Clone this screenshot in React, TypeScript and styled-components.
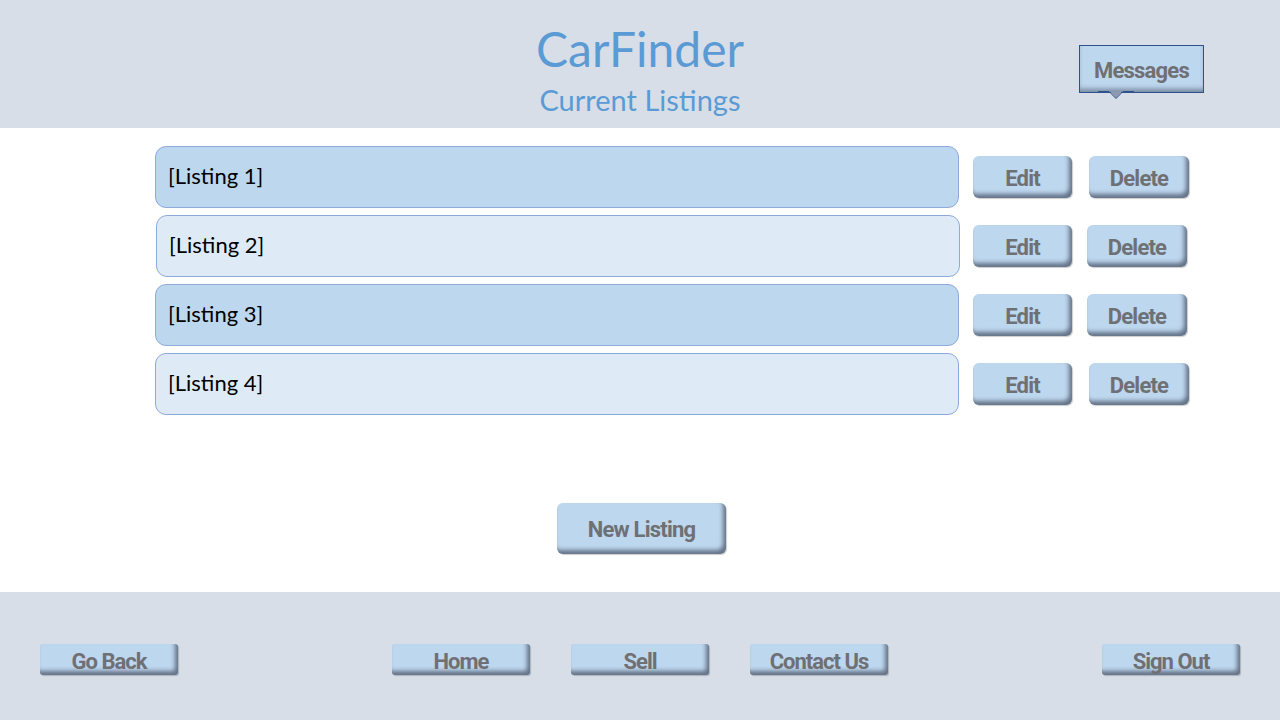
import React from "react";
import styled, { createGlobalStyle } from "styled-components";

const GlobalStyle = createGlobalStyle`
  html, body {
    margin: 0;
    padding: 0;
    background: #ffffff;
  }
  #root {
    width: 1280px;
    height: 720px;
  }
`;

const Page = styled.div`
  width: 1280px;
  height: 720px;
  display: flex;
  flex-direction: column;
  overflow: hidden;
`;

const Header = styled.header`
  height: 128px;
  background: #d7dee7;
  display: grid;
  grid-template-columns: 1fr auto 1fr;
  align-items: start;
`;

const TitleBlock = styled.div`
  display: flex;
  flex-direction: column;
  align-items: center;
  padding-top: 20px;
  font-family: Lato, "Open Sans", sans-serif;
  color: #5b9bd5;
`;

const Title = styled.h1`
  margin: 0;
  font-size: 48px;
  font-weight: 400;
  line-height: 58px;
`;

const Subtitle = styled.h2`
  margin: 5px 0 0;
  font-size: 29px;
  font-weight: 400;
  line-height: 34px;
`;

const HeaderRight = styled.div`
  display: flex;
  justify-content: flex-end;
  padding: 45px 76px 0 0;
`;

const bevel = `
  background: #bdd7ee;
  box-shadow: inset -3px -4px 4px rgba(62, 72, 92, 0.7),
    1px 1px 1px rgba(0, 0, 0, 0.2);
  font-family: Roboto, "DejaVu Sans", sans-serif;
  font-weight: 700;
  font-size: 22px;
  letter-spacing: -0.8px;
  color: #6f7074;
  border: none;
  display: flex;
  align-items: center;
  justify-content: center;
  padding: 2px 0 0;
  cursor: pointer;
`;

const MessagesButton = styled.button`
  ${bevel}
  position: relative;
  width: 125px;
  height: 48px;
  border: 1px solid #2f528f;
  border-radius: 0;
  box-shadow: inset 0 -5px 5px -2px rgba(70, 82, 104, 0.6);
`;

const Pointer = styled.svg`
  position: absolute;
  left: 18px;
  bottom: -8px;
`;

const Main = styled.main`
  flex: 1;
  display: flex;
  flex-direction: column;
  padding: 18px 0 38px 155px;
`;

const ListingList = styled.div`
  display: flex;
  flex-direction: column;
  gap: 7px;
`;

const ListingRow = styled.div`
  display: flex;
  align-items: center;
`;

const ListingCard = styled.div<{ $shade: "dark" | "light"; $shift: number }>`
  width: 804px;
  height: 62px;
  box-sizing: border-box;
  margin-left: ${(p) => p.$shift}px;
  margin-right: ${(p) => 14 - p.$shift}px;
  background: ${(p) => (p.$shade === "dark" ? "#bdd7ee" : "#deebf7")};
  border: 1px solid #8eaadb;
  border-radius: 11px;
  display: flex;
  align-items: center;
  padding: 0 0 3px 12px;
  font-family: Lato, "Open Sans", sans-serif;
  font-size: 22px;
  color: #000;
`;

const RowButton = styled.button<{ $w: number }>`
  ${bevel}
  width: ${(p) => p.$w}px;
  height: 42px;
  border-radius: 6px;
`;

const ButtonPair = styled.div<{ $gap: number }>`
  display: flex;
  gap: ${(p) => p.$gap}px;
`;

const NewListing = styled.button`
  ${bevel}
  margin: auto 0 0 402px;
  width: 169px;
  height: 51px;
  border-radius: 6px;
`;

const Footer = styled.footer`
  height: 128px;
  background: #d7dee7;
  display: flex;
  justify-content: space-between;
  align-items: flex-start;
  padding: 52px 40px 0;
  box-sizing: border-box;
`;

const NavGroup = styled.nav`
  display: flex;
  gap: 41px;
`;

const NavButton = styled.button`
  ${bevel}
  width: 138px;
  height: 31px;
  border-radius: 3px;
  letter-spacing: -1px;
  padding-top: 3px;
`;

const listings = [
  { name: "[Listing 1]", shade: "dark" as const, shift: 0, gap: 17 },
  { name: "[Listing 2]", shade: "light" as const, shift: 1, gap: 15 },
  { name: "[Listing 3]", shade: "dark" as const, shift: 0, gap: 15 },
  { name: "[Listing 4]", shade: "light" as const, shift: 0, gap: 17 },
];

export default function App() {
  return (
    <Page>
      <GlobalStyle />
      <Header>
        <div />
        <TitleBlock>
          <Title>CarFinder</Title>
          <Subtitle>Current Listings</Subtitle>
        </TitleBlock>
        <HeaderRight>
          <MessagesButton>
            Messages
            <Pointer width="36" height="9" viewBox="0 0 36 9">
              <path d="M0 0.5 L12 0.5 L18 7.5 L24 0.5 L36 0.5" fill="#8d9ab0" />
              <path d="M0 0.5 L11 0.5 L18 7.5 L25 0.5 L36 0.5" fill="none" stroke="#2f528f" strokeWidth="1" />
            </Pointer>
          </MessagesButton>
        </HeaderRight>
      </Header>

      <Main>
        <ListingList>
          {listings.map((l) => (
            <ListingRow key={l.name}>
              <ListingCard $shade={l.shade} $shift={l.shift}>
                {l.name}
              </ListingCard>
              <ButtonPair $gap={l.gap}>
                <RowButton $w={99}>Edit</RowButton>
                <RowButton $w={100}>Delete</RowButton>
              </ButtonPair>
            </ListingRow>
          ))}
        </ListingList>
        <NewListing>New Listing</NewListing>
      </Main>

      <Footer>
        <NavButton>Go Back</NavButton>
        <NavGroup>
          <NavButton>Home</NavButton>
          <NavButton>Sell</NavButton>
          <NavButton>Contact Us</NavButton>
        </NavGroup>
        <NavButton>Sign Out</NavButton>
      </Footer>
    </Page>
  );
}
